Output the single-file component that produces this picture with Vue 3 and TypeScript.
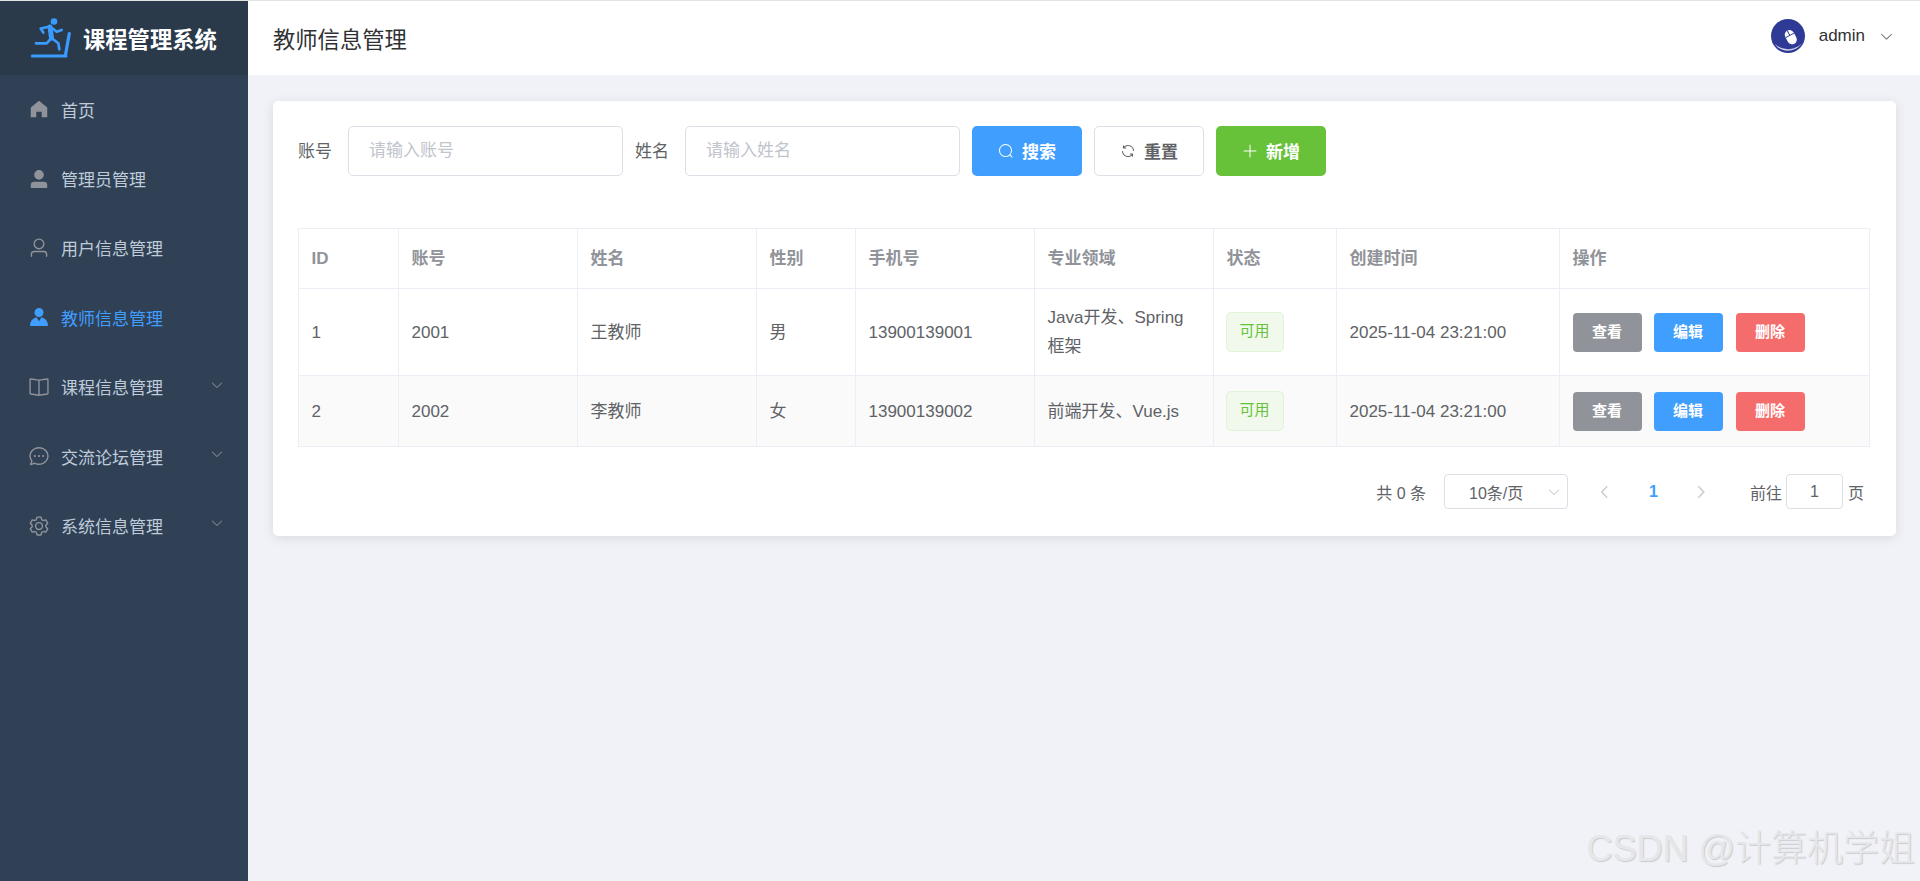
<template>
  <div class="layout">
    <aside class="sidebar">
      <div class="logo">
        <svg class="logo-mark" viewBox="0 0 40 40" fill="none" stroke="#3a9bff" stroke-linecap="round" stroke-linejoin="round">
          <circle cx="23" cy="3.5" r="3.3" fill="#3a9bff" stroke="none" />
          <path d="M19 9 20.5 20" stroke-width="5" />
          <path d="M19 8.5 9.7 10.5 12.3 14.5M19 8.5 25.7 13.7 30.7 12M20.5 20 27.3 25.3 28.3 31.3M20.5 20 15.7 25.3 5 25.3" stroke-width="2.7" />
          <path d="M1.5 38H35" stroke-width="3.2" />
          <path d="M34.5 37 38.3 15.5" stroke-width="3.2" />
        </svg>
        <span class="logo-text">课程管理系统</span>
      </div>
      <nav class="menu">
        <div v-for="item in menu" :key="item.label" class="menu-item" :class="{ active: item.active }">
          <svg class="menu-icon" viewBox="0 0 1024 1024" fill="currentColor">
            <path v-for="d in item.paths" :key="d" :d="d" />
          </svg>
          <span>{{ item.label }}</span>
          <svg v-if="item.sub" class="menu-arrow" viewBox="0 0 1024 1024" fill="currentColor"><path :d="icons.arrowDown" /></svg>
        </div>
      </nav>
    </aside>

    <div class="main">
      <header class="topbar">
        <h1 class="page-title">教师信息管理</h1>
        <div class="user">
          <svg class="avatar" viewBox="0 0 34 34">
            <circle cx="17" cy="17" r="17" fill="#2f3a96" />
            <path d="M4 25C11 32 24 32 31 24 25 34 9 34 4 25Z" fill="#fff" opacity=".75" />
            <g transform="rotate(-28 20 18)">
              <rect x="15" y="10.5" width="9.5" height="15" rx="4.8" fill="#fff" />
              <path d="M19.7 10.5V16M15 16H24.5" stroke="#2f3a96" stroke-width="1" />
            </g>
          </svg>
          <span class="user-name">admin</span>
          <svg class="user-arrow" viewBox="0 0 1024 1024" fill="currentColor"><path :d="icons.arrowDown" /></svg>
        </div>
      </header>

      <section class="content">
        <div class="card">
          <form class="filters" @submit.prevent>
            <label class="filter-label">账号</label>
            <input class="filter-input" placeholder="请输入账号" />
            <label class="filter-label">姓名</label>
            <input class="filter-input" placeholder="请输入姓名" />
            <button class="btn primary" type="button">
              <svg viewBox="0 0 1024 1024" fill="currentColor"><path :d="icons.search" /></svg>搜索
            </button>
            <button class="btn plain" type="button">
              <svg viewBox="0 0 1024 1024" fill="currentColor"><path :d="icons.refresh" /></svg>重置
            </button>
            <button class="btn success" type="button">
              <svg viewBox="0 0 1024 1024" fill="currentColor"><path :d="icons.plus" /></svg>新增
            </button>
          </form>

          <table class="table">
            <colgroup>
              <col v-for="w in colWidths" :key="w.key" :style="{ width: w.width + 'px' }" />
            </colgroup>
            <thead>
              <tr>
                <th v-for="h in headers" :key="h">{{ h }}</th>
              </tr>
            </thead>
            <tbody>
              <tr v-for="row in rows" :key="row.id" :class="{ striped: row.id === 2 }">
                <td>{{ row.id }}</td>
                <td>{{ row.account }}</td>
                <td>{{ row.name }}</td>
                <td>{{ row.gender }}</td>
                <td>{{ row.phone }}</td>
                <td>{{ row.field }}</td>
                <td><span class="tag">可用</span></td>
                <td>{{ row.created }}</td>
                <td>
                  <div class="actions">
                    <button class="mini gray" type="button">查看</button>
                    <button class="mini blue" type="button">编辑</button>
                    <button class="mini red" type="button">删除</button>
                  </div>
                </td>
              </tr>
            </tbody>
          </table>

          <div class="pager">
            <span class="total">共 0 条</span>
            <div class="size-select">
              <span>10条/页</span>
              <svg viewBox="0 0 1024 1024" fill="currentColor"><path :d="icons.arrowDown" /></svg>
            </div>
            <svg class="page-arrow left" viewBox="0 0 1024 1024" fill="currentColor"><path :d="icons.arrowLeft" /></svg>
            <span class="page-num">1</span>
            <svg class="page-arrow right" viewBox="0 0 1024 1024" fill="currentColor"><path :d="icons.arrowRight" /></svg>
            <span class="jump">前往</span>
            <div class="jump-box">1</div>
            <span class="jump-end">页</span>
          </div>
        </div>
      </section>
    </div>

    <div class="watermark">CSDN @计算机学姐</div>
  </div>
</template>

<script setup lang="ts">
interface MenuItem {
  label: string;
  paths: string[];
  sub?: boolean;
  active?: boolean;
}

const icons = {
  arrowDown: "M831.872 340.864 512 652.672 192.128 340.864a30.592 30.592 0 0 0-42.752 0 29.12 29.12 0 0 0 0 41.6L489.664 714.24a32 32 0 0 0 44.672 0l340.288-331.712a29.12 29.12 0 0 0 0-41.728 30.592 30.592 0 0 0-42.752 0z",
  arrowLeft: "M609.408 149.376 277.76 489.6a32 32 0 0 0 0 44.672l331.648 340.352a29.12 29.12 0 0 0 41.728 0 30.592 30.592 0 0 0 0-42.752L339.264 511.936l311.872-319.872a30.592 30.592 0 0 0 0-42.688 29.12 29.12 0 0 0-41.728 0z",
  arrowRight: "M340.864 149.312a30.592 30.592 0 0 0 0 42.752L652.736 512 340.864 831.872a30.592 30.592 0 0 0 0 42.752 29.12 29.12 0 0 0 41.728 0L714.24 534.336a32 32 0 0 0 0-44.672L382.592 149.376a29.12 29.12 0 0 0-41.728 0z",
  search: "m795.904 750.72 124.992 124.928a32 32 0 0 1-45.248 45.248L750.656 795.904a416 416 0 1 1 45.248-45.248zM480 832a352 352 0 1 0 0-704 352 352 0 0 0 0 704",
  refresh: "M771.776 794.88A384 384 0 0 1 128 512h64a320 320 0 0 0 555.712 216.448H654.72a32 32 0 1 1 0-64h149.056a32 32 0 0 1 32 32v148.928a32 32 0 1 1-64 0v-50.56zM276.288 295.616h92.992a32 32 0 0 1 0 64H220.16a32 32 0 0 1-32-32V178.56a32 32 0 0 1 64 0v50.56A384 384 0 0 1 896.128 512h-64a320 320 0 0 0-555.776-216.384z",
  plus: "M480 480V128a32 32 0 0 1 64 0v352h352a32 32 0 0 1 0 64H544v352a32 32 0 1 1-64 0V544H128a32 32 0 0 1 0-64z",
};

const menu: MenuItem[] = [
  { label: "首页", paths: ["M512 128 128 447.936V896h255.936V640H640v256h255.936V447.936z"] },
  { label: "管理员管理", paths: ["M288 320a224 224 0 1 0 448 0 224 224 0 1 0-448 0m544 608H160a32 32 0 0 1-32-32v-96a160 160 0 0 1 160-160h448a160 160 0 0 1 160 160v96a32 32 0 0 1-32 32z"] },
  { label: "用户信息管理", paths: ["M512 512a192 192 0 1 0 0-384 192 192 0 0 0 0 384m0 64a256 256 0 1 1 0-512 256 256 0 0 1 0 512m320 320v-96a96 96 0 0 0-96-96H288a96 96 0 0 0-96 96v96a32 32 0 1 1-64 0v-96a160 160 0 0 1 160-160h448a160 160 0 0 1 160 160v96a32 32 0 1 1-64 0"] },
  { label: "教师信息管理", active: true, paths: ["M628.736 528.896A416 416 0 0 1 928 928H96a415.872 415.872 0 0 1 299.264-399.104L512 704zM720 304a208 208 0 1 1-416 0 208 208 0 0 1 416 0"] },
  { label: "课程信息管理", sub: true, paths: ["m512 863.36 384-54.848v-638.72L525.568 222.72a96 96 0 0 1-27.136 0L128 169.792v638.72zM137.024 106.432l370.432 52.928a32 32 0 0 0 9.088 0l370.432-52.928A64 64 0 0 1 960 169.792v638.72a64 64 0 0 1-54.976 63.36l-388.48 55.488a32 32 0 0 1-9.088 0l-388.48-55.488A64 64 0 0 1 64 808.512v-638.72a64 64 0 0 1 73.024-63.36z", "M480 192h64v704h-64z"] },
  { label: "交流论坛管理", sub: true, paths: ["m174.72 855.68 135.296-45.12 23.68 11.84C388.096 849.536 448.576 864 512 864c211.84 0 384-166.784 384-352S723.84 160 512 160 128 326.784 128 512c0 69.12 24.96 139.264 70.848 199.232l22.08 28.8-46.272 115.584zm-45.248 82.56A32 32 0 0 1 89.6 896l58.368-145.92C94.72 680.32 64 596.864 64 512 64 299.904 256 96 512 96s448 203.904 448 416-192 416-448 416a461.056 461.056 0 0 1-206.912-48.384l-175.616 58.56z", "M512 563.2a51.2 51.2 0 1 1 0-102.4 51.2 51.2 0 0 1 0 102.4m192 0a51.2 51.2 0 1 1 0-102.4 51.2 51.2 0 0 1 0 102.4m-384 0a51.2 51.2 0 1 1 0-102.4 51.2 51.2 0 0 1 0 102.4"] },
  { label: "系统信息管理", sub: true, paths: ["M600.704 64a32 32 0 0 1 30.464 22.208l35.2 109.376c14.784 7.232 28.928 15.36 42.432 24.512l112.384-24.192a32 32 0 0 1 34.432 15.36L944.32 364.8a32 32 0 0 1-4.032 37.504l-77.12 85.12a357.12 357.12 0 0 1 0 49.024l77.12 85.248a32 32 0 0 1 4.032 37.504l-88.704 153.6a32 32 0 0 1-34.432 15.296L708.8 803.904c-13.44 9.088-27.648 17.28-42.368 24.512l-35.264 109.376A32 32 0 0 1 600.704 960H423.296a32 32 0 0 1-30.464-22.208L357.696 828.48a351.616 351.616 0 0 1-42.56-24.64l-112.32 24.256a32 32 0 0 1-34.432-15.36L79.68 659.2a32 32 0 0 1 4.032-37.504l77.12-85.248a357.12 357.12 0 0 1 0-48.896l-77.12-85.248A32 32 0 0 1 79.68 364.8l88.704-153.6a32 32 0 0 1 34.432-15.296l112.32 24.256c13.568-9.152 27.776-17.408 42.56-24.64l35.2-109.312A32 32 0 0 1 423.232 64H600.64zm-23.424 64H446.72l-36.352 113.088-24.512 11.968a294.113 294.113 0 0 0-34.816 20.096l-22.656 15.36-116.224-25.088-65.28 113.152 79.68 88.192-1.92 27.136a293.12 293.12 0 0 0 0 40.192l1.92 27.136-79.808 88.192 65.344 113.152 116.224-25.024 22.656 15.296a294.113 294.113 0 0 0 34.816 20.096l24.512 11.968L446.72 896h130.688l36.48-113.152 24.448-11.904a288.282 288.282 0 0 0 34.752-20.096l22.592-15.296 116.288 25.024 65.28-113.152-79.744-88.192 1.92-27.136a293.12 293.12 0 0 0 0-40.256l-1.92-27.136 79.808-88.128-65.344-113.152-116.288 24.96-22.592-15.232a287.616 287.616 0 0 0-34.752-20.096l-24.448-11.904L577.344 128zM512 320a192 192 0 1 1 0 384 192 192 0 0 1 0-384m0 64a128 128 0 1 0 0 256 128 128 0 0 0 0-256"] },
];

const headers = ["ID", "账号", "姓名", "性别", "手机号", "专业领域", "状态", "创建时间", "操作"];
const colWidths = [100, 179, 179, 99, 179, 179, 123, 223, 310].map((width, key) => ({ key, width }));

const rows = [
  { id: 1, account: "2001", name: "王教师", gender: "男", phone: "13900139001", field: "Java开发、Spring框架", created: "2025-11-04 23:21:00" },
  { id: 2, account: "2002", name: "李教师", gender: "女", phone: "13900139002", field: "前端开发、Vue.js", created: "2025-11-04 23:21:00" },
];
</script>

<style>
html,
body {
  margin: 0;
  background: #f0f2f7;
}
</style>

<style scoped>
.layout {
  position: relative;
  display: flex;
  min-height: 880px;
  border-top: 1px solid #e4e4e4;
  font-family: "Liberation Sans", "Noto Sans CJK SC", sans-serif;
  font-size: 17px;
  color: #606266;
  background: #f0f2f7;
  overflow: hidden;
}

.sidebar {
  flex: 0 0 248px;
  background: #304156;
  color: #bfcbd9;
}

.logo {
  display: flex;
  align-items: center;
  height: 74px;
  padding-left: 31px;
  box-sizing: border-box;
  background: #2b3a4b;
}

.logo-mark {
  width: 40px;
  height: 40px;
  margin-right: 12px;
}

.logo-text {
  font-size: 22.3px;
  font-weight: 700;
  color: #fff;
}

.menu-item {
  display: flex;
  align-items: center;
  height: 69.4px;
  padding-left: 28px;
  padding-bottom: 1px;
  box-sizing: border-box;
  position: relative;
}

.menu-item.active {
  color: #409eff;
}

.menu-icon {
  width: 22px;
  height: 22px;
  margin-right: 11px;
  color: #909399;
}

.active .menu-icon {
  color: #409eff;
}

.menu-arrow {
  position: absolute;
  right: 24px;
  top: 25px;
  width: 14px;
  height: 14px;
  color: #909399;
}

.main {
  flex: 1;
  min-width: 0;
}

.topbar {
  display: flex;
  align-items: center;
  justify-content: space-between;
  height: 74px;
  padding: 0 26px 0 25px;
  background: #fff;
}

.page-title {
  margin: 0;
  font-size: 22.3px;
  font-weight: 400;
  color: #303133;
}

.user {
  display: flex;
  align-items: center;
  margin-bottom: 4px;
  color: #303133;
}

.avatar {
  width: 34px;
  height: 34px;
  margin-right: 14px;
}

.user-name {
  font-size: 17px;
}

.user-arrow {
  width: 15px;
  height: 15px;
  margin-left: 14px;
  color: #606266;
}

.content {
  padding: 26px 24px 0 25px;
}

.card {
  padding: 25px 25px 27px;
  background: #fff;
  border-radius: 5px;
  box-shadow: 0 2px 12px rgba(0, 0, 0, 0.1);
}

.filters {
  display: flex;
  align-items: center;
  height: 50px;
}

.filter-label {
  margin-right: 16px;
  padding-bottom: 4px;
}

.filter-input {
  width: 275px;
  height: 50px;
  margin-right: 12px;
  padding: 0 20px;
  box-sizing: border-box;
  border: 1px solid #dcdfe6;
  border-radius: 5px;
  outline: none;
  font: inherit;
  color: #606266;
}

.filter-input::placeholder {
  color: #c0c4cc;
}

.btn {
  display: flex;
  align-items: center;
  justify-content: center;
  gap: 8px;
  width: 110px;
  height: 50px;
  margin-right: 12px;
  padding: 0 0 2px;
  border: 1px solid transparent;
  border-radius: 5px;
  font: inherit;
  font-weight: 700;
}

.btn svg {
  width: 16px;
  height: 16px;
  margin-top: 2px;
}

.btn.primary {
  background: #409eff;
  color: #fff;
}

.btn.plain {
  background: #fff;
  border-color: #dcdfe6;
  color: #606266;
}

.btn.success {
  background: #67c23a;
  color: #fff;
}

.table {
  width: 1571px;
  margin-top: 52px;
  table-layout: fixed;
  border-collapse: collapse;
}

.table th,
.table td {
  padding: 0 13px 0 12.5px;
  border: 1px solid #ebeef5;
  text-align: left;
  line-height: 29px;
}

.table th {
  height: 59px;
  font-weight: 700;
  color: #909399;
}

.table tbody tr:first-child td {
  height: 86px;
}

.table tbody tr.striped td {
  height: 70px;
  background: #fafafa;
}

.tag {
  display: inline-block;
  box-sizing: border-box;
  width: 58px;
  height: 40px;
  line-height: 36px;
  margin-left: -1px;
  vertical-align: middle;
  text-align: center;
  font-size: 15px;
  background: #f0f9eb;
  border: 1px solid #e1f3d8;
  border-radius: 5px;
  color: #67c23a;
}

.actions {
  display: flex;
  gap: 12px;
}

.mini {
  width: 69px;
  height: 39px;
  padding: 0 0 2px;
  border: 0;
  border-radius: 4px;
  font: inherit;
  font-size: 15px;
  font-weight: 700;
  color: #fff;
}

.mini:last-child {
  margin-left: 1px;
}

.mini.gray {
  background: #909399;
}

.mini.blue {
  background: #409eff;
}

.mini.red {
  background: #f56c6c;
}

.pager {
  display: flex;
  align-items: center;
  justify-content: flex-end;
  height: 35px;
  margin-top: 27px;
  padding-right: 7px;
  font-size: 16px;
}

.total {
  margin-right: 18px;
}

.size-select {
  display: flex;
  align-items: center;
  justify-content: space-between;
  box-sizing: border-box;
  width: 124px;
  height: 35px;
  padding: 0 6px 0 24px;
  border: 1px solid #dcdfe6;
  border-radius: 4px;
}

.size-select svg {
  width: 14px;
  height: 14px;
  color: #c0c4cc;
}

.page-arrow {
  width: 16px;
  height: 16px;
  color: #c0c4cc;
  stroke: currentColor;
  stroke-width: 30;
}

.page-arrow.left {
  margin-left: 29px;
}

.page-num {
  margin: 0 35px 0 36px;
  font-weight: 700;
  color: #409eff;
}

.jump {
  margin-left: 41px;
  margin-right: 4px;
}

.jump-box {
  box-sizing: border-box;
  width: 57px;
  height: 35px;
  line-height: 33px;
  text-align: center;
  border: 1px solid #dcdfe6;
  border-radius: 4px;
}

.jump-end {
  margin-left: 5px;
}

.watermark {
  position: absolute;
  right: 5px;
  bottom: 9px;
  font-size: 36px;
  font-weight: 300;
  line-height: 46px;
  white-space: nowrap;
  color: #e6e7ea;
  text-shadow: 1px 1px 1px #c8cacd;
  pointer-events: none;
}
</style>
